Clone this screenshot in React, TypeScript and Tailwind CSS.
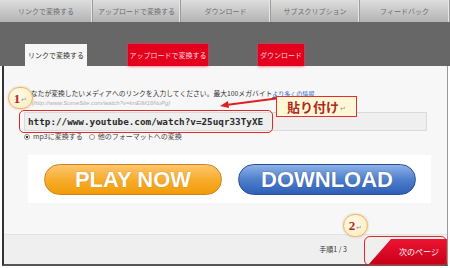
import React from "react";

const navTabs = [
  { label: "リンクで変換する", w: "w-[93px]" },
  { label: "アップロードで変換する", w: "w-[88px]" },
  { label: "ダウンロード", w: "w-[90px]" },
  { label: "サブスクリプション", w: "w-[89px]" },
  { label: "フィードバック", w: "flex-1" },
];

const jp = "font-['Noto_Sans_CJK_JP','Noto_Sans',sans-serif]";

const Marker = ({ n, className }: { n: string; className: string }) => (
  <div
    className={`absolute flex items-center justify-center rounded-full border border-[#e9b46a] bg-[radial-gradient(circle_at_40%_35%,#fffbea,#fde9b8)] shadow-[0_0_2px_rgba(200,130,40,0.5)] ${className}`}
  >
    <span className="font-['Liberation_Serif',serif] text-[13px] font-bold leading-none text-[#b3261e]">{n}</span>
    <span className="ml-[1px] mt-[3px] text-[7px] leading-none text-[#999]">↵</span>
  </div>
);

const App = () => {
  return (
    <div className={`relative h-[268px] w-[450px] overflow-hidden bg-white ${jp}`}>
      {/* top nav */}
      <nav className="flex h-[22px] bg-gradient-to-b from-[#dedede] to-[#b3b3b3]">
        {navTabs.map((t) => (
          <div
            key={t.label}
            className={`${t.w} flex items-center justify-center border-r border-r-[#9c9c9c] shadow-[inset_-1px_0_0_#e6e6e6] text-[7px] text-[#6e6e6e]`}
          >
            {t.label}
          </div>
        ))}
      </nav>

      {/* dark band with sub tabs */}
      <div className="flex h-[44px] items-end bg-[#676767] pl-[25px]">
        <div className="flex h-[22px] w-[62px] items-center justify-center bg-[#f6f6f6] text-[7px] text-[#333]">
          リンクで変換する
        </div>
        <div className="ml-[41px] flex h-[22px] w-[80px] items-center justify-center bg-[#e4001d] text-[7px] text-[#ffd6da] shadow-[0_0_3px_#ff3050]">
          アップロードで変換する
        </div>
        <div className="ml-[50px] flex h-[22px] w-[46px] items-center justify-center bg-[#e4001d] text-[7px] text-[#ffd6da] shadow-[0_0_3px_#ff3050]">
          ダウンロード
        </div>
      </div>

      {/* main frame */}
      <div className="ml-[2px] w-[446px] border-b-2 border-l-2 border-r border-b-[#555] border-l-[#333] border-r-[#999]">
        <div className="h-[168px] bg-[#f7f7f7] px-[20px] pt-[22px]">
          <p className="text-[6.8px] leading-[10px] text-[#333]">
            あなたが変換したいメディアへのリンクを入力してください。最大100メガバイト
            <span className="text-[6px] text-[#3366cc] underline">より多くの情報</span>
          </p>
          <p className="pl-[8px] font-['Liberation_Sans',sans-serif] text-[6px] italic leading-[8px] text-[#b0b0b0]">
            (http://www.SomeSite.com/watch?v=knEIM16NuPg)
          </p>
          <div className="mt-[5px] flex h-[19px] items-center border border-[#dadada] bg-[#efefef] px-[3px] font-['DejaVu_Sans_Mono',monospace] text-[9.3px] font-bold text-[#2a2a2a]">
            http://www.youtube.com/watch?v=25uqr33TyXE
          </div>
          <div className="mt-[1px] flex items-center gap-[3px] text-[7px] leading-[9px] text-[#444]">
            <span className="inline-block h-[6px] w-[6px] rounded-full border border-[#888] bg-[radial-gradient(circle,#333_35%,#fff_45%)]" />
            <span>mp3に変換する</span>
            <span className="ml-[3px] inline-block h-[6px] w-[6px] rounded-full border border-[#999] bg-white" />
            <span>他のフォーマットへの変換</span>
          </div>
          <div className="ml-[4px] mt-[14px] flex h-[48px] w-[403px] items-center gap-[16px] bg-white pl-[16px] font-['Liberation_Sans',sans-serif]">
            <div className="flex h-[31px] w-[178px] items-center justify-center rounded-full border border-[#d0821f] bg-gradient-to-b from-[#fcc66a] via-[#f7ad2c] to-[#f29c00] text-[22px] font-bold text-white [text-shadow:0_0_1px_#c77a10]">
              PLAY NOW
            </div>
            <div className="flex h-[31px] w-[178px] items-center justify-center rounded-full border border-[#2b4f99] bg-gradient-to-b from-[#8eb2e6] via-[#4f7fcc] to-[#2f5fb6] text-[22px] font-bold text-white [text-shadow:0_0_1px_#1d3a7a]">
              DOWNLOAD
            </div>
          </div>
        </div>
        <div className="flex h-[30px] items-end justify-end border-t border-t-[#e3e3e3] bg-[#efefef]">
          <span className="mb-[10px] mr-[22px] text-[7px] text-[#333]">手順1 / 3</span>
          <div className="flex h-[25px] w-[78px] items-center justify-center bg-gradient-to-b from-[#ec1430] to-[#c9001b] pl-[22px] text-[8px] text-white [clip-path:polygon(22px_0,100%_0,100%_100%,0_100%)]">
            次のページ
          </div>
        </div>
      </div>

      {/* annotations */}
      <Marker n="1" className="left-[8px] top-[87px] h-[22px] w-[25px]" />
      <Marker n="2" className="left-[343px] top-[214px] h-[23px] w-[25px]" />
      <div className="absolute left-[19px] top-[110px] h-[23px] w-[254px] rounded-[5px] border-[1.5px] border-[#e02828]" />
      <div className="absolute left-[364px] top-[236px] h-[30px] w-[83px] rounded-[6px] border-[1.5px] border-[#e02828]" />
      <svg className="absolute left-[218px] top-[94px]" width="64" height="16" viewBox="0 0 64 16">
        <line x1="62" y1="4" x2="8" y2="11" stroke="#e02020" strokeWidth="2" />
        <polygon points="2,12 10,7 11,14" fill="#e02020" />
      </svg>
      <div className="absolute left-[276px] top-[96px] flex h-[21px] w-[81px] items-center justify-center border border-[#e03030] bg-[#fff7d6]">
        <span className="text-[13px] font-bold leading-none text-[#b0281c]">貼り付け</span>
        <span className="ml-[1px] mt-[4px] text-[7px] leading-none text-[#999]">↵</span>
      </div>
    </div>
  );
};

export default App;
